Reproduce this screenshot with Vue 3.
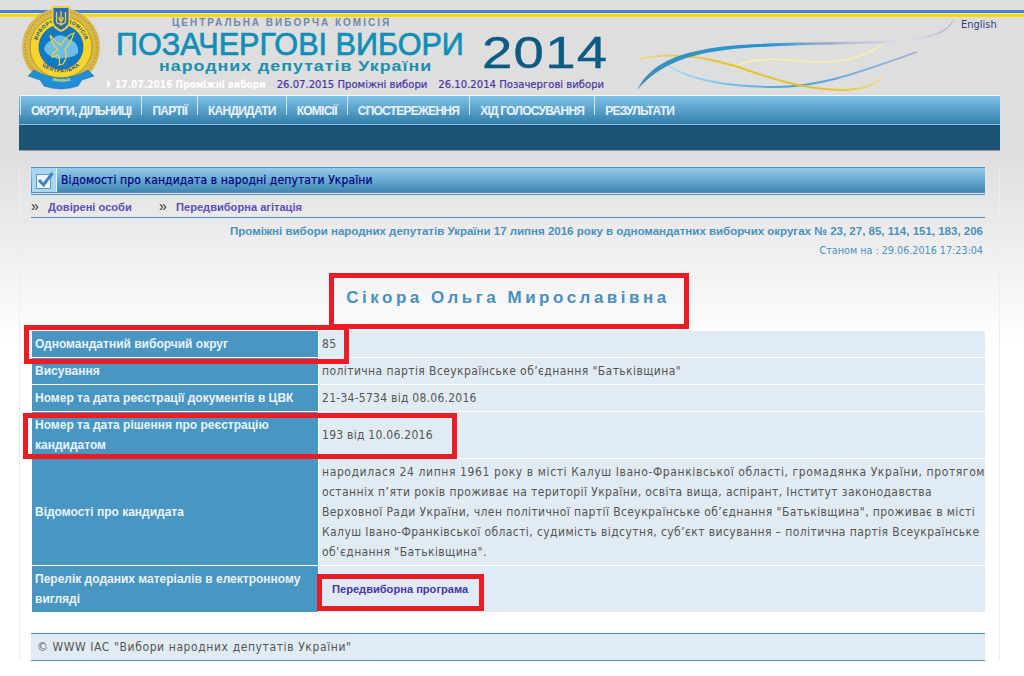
<script setup>
const navItems = ['ОКРУГИ, ДІЛЬНИЦІ', 'ПАРТІЇ', 'КАНДИДАТИ', 'КОМІСІЇ', 'СПОСТЕРЕЖЕННЯ', 'ХІД ГОЛОСУВАННЯ', 'РЕЗУЛЬТАТИ'];
const elections = [
  { text: '26.07.2015 Проміжні вибори' },
  { text: '26.10.2014 Позачергові вибори' }
];
const bio = [
  'народилася 24 липня 1961 року в місті Калуш Івано-Франківської області, громадянка України, протягом',
  'останніх п’яти років проживає на території України, освіта вища, аспірант, Інститут законодавства',
  'Верховної Ради України, член політичної партії Всеукраїнське об’єднання "Батьківщина", проживає в місті',
  'Калуш Івано-Франківської області, судимість відсутня, суб’єкт висування – політична партія Всеукраїнське',
  'об’єднання "Батьківщина".'
];
</script>

<template>
  <div class="page">
    <div class="stripe"></div>

    <header class="head">
      <!-- декоративні лінії -->
      <svg class="swoosh" width="1024" height="95" viewBox="0 0 1024 95">
        <defs>
          <linearGradient id="gBlue" x1="637" y1="0" x2="954" y2="0" gradientUnits="userSpaceOnUse">
            <stop offset="0" stop-color="#3f8fb5" />
            <stop offset="0.4" stop-color="#1f96d6" />
            <stop offset="0.62" stop-color="#a9b0ca" />
            <stop offset="0.85" stop-color="#e2e4ea" />
            <stop offset="1" stop-color="#a9aecb" />
          </linearGradient>
          <linearGradient id="gSky" x1="669" y1="0" x2="917" y2="0" gradientUnits="userSpaceOnUse">
            <stop offset="0" stop-color="#a8dcf5" />
            <stop offset="0.5" stop-color="#3ea6dc" />
            <stop offset="1" stop-color="#b0b4d4" />
          </linearGradient>
          <linearGradient id="gGold" x1="640" y1="0" x2="882" y2="0" gradientUnits="userSpaceOnUse">
            <stop offset="0" stop-color="#e8d890" />
            <stop offset="0.3" stop-color="#e6c227" />
            <stop offset="0.8" stop-color="#e6c433" />
            <stop offset="1" stop-color="#eedc98" />
          </linearGradient>
        </defs>
        <path d="M732 68C745 60 765 58 790 60C820 63 850 66 882 45" fill="none" stroke="#f7eeb0" stroke-width="1.6" />
        <path d="M669 66C690 80 730 87 775 87C825 87 870 68 917 52" fill="none" stroke="url(#gSky)" stroke-width="2" />
        <path d="M640 59C665 53 695 54 735 66C770 78 800 89 840 90C860 90 875 85 882 77" fill="none" stroke="url(#gGold)" stroke-width="2" />
        <path d="M637 90C650 65 675 50 740 45C800 41 860 43 900 40C930 37 948 32 954 18C951 33 930 39 900 42C860 45 800 44 745 48C690 52 660 64 637 90Z" fill="url(#gBlue)" />
      </svg>

      <svg class="logo" width="82" height="84" viewBox="0 0 82 84">
        <defs>
          <path id="ringTop" d="M16.5 50A24.5 24.5 0 1 1 61.5 50" />
          <path id="ringBottom" d="M12 48A29 29 0 0 0 66 48" />
          <path id="ribbonText" d="M25 73Q39 79 53 73" />
        </defs>
        <circle cx="39" cy="41" r="39" fill="#d9b84a" />
        <circle cx="39" cy="41" r="36" fill="none" stroke="#c39f2f" stroke-width="2" stroke-dasharray="1.5 2" />
        <circle cx="39" cy="41" r="31" fill="#f4d52e" stroke="#a88a25" stroke-width="0.8" />
        <circle cx="39" cy="41" r="22" fill="#1079c4" stroke="#2b5f8f" stroke-width="0.8" />
        <path d="M22 43C24 35 30 35 33 31C38 27 44 31 48 34C54 35 57 41 56 47C50 53 42 51 36 53C30 51 24 49 22 43Z" fill="#6fbdeb" />
        <path d="M28 29C32 35 36 37 39 39C42 33 46 29 52 27C50 33 47 39 43 43C45 48 44 54 41 58L37 59C38 54 38 51 36 49L30 51L31 47L36 44C32 40 29 35 28 29Z" fill="none" stroke="#f4d52e" stroke-width="1.2" />
        <text class="logo__ring" font-size="5.2" letter-spacing="0.5"><textPath href="#ringTop" startOffset="50%" text-anchor="middle">ВИБОРЧА &#160; &#160; КОМІСІЯ</textPath></text>
        <text class="logo__ring" font-size="5.2" letter-spacing="0.5"><textPath href="#ringBottom" startOffset="50%" text-anchor="middle">ЦЕНТРАЛЬНА</textPath></text>
        <path d="M12 64Q26 72 39 72Q52 72 66 64L72 70L60 74L56 80Q39 86 22 80L18 74L6 70Z" fill="#1f8fd8" stroke="#0d6cae" stroke-width="0.5" />
        <text class="logo__ribbon" font-size="4.4"><textPath href="#ribbonText" startOffset="50%" text-anchor="middle">УКРАЇНА</textPath></text>
        <path d="M30 0H48V16Q48 22 39 26Q30 22 30 16Z" fill="#f3cf2c" />
        <path d="M31.5 2H46.5V15.5Q46.5 20 39 24Q31.5 20 31.5 15.5Z" fill="#2b6cb8" />
        <path d="M39 5V20M34.5 6V15C34.5 18 37 18 39 18C41 18 43.5 18 43.5 15V6M37 11C37 14 38 15 39 15C40 15 41 14 41 11" fill="none" stroke="#f3cf2c" stroke-width="1.3" />
      </svg>

      <a class="lang">English</a>

      <div class="brand">
        <div class="brand__org">ЦЕНТРАЛЬНА ВИБОРЧА КОМІСІЯ</div>
        <div class="brand__row">
          <div>
            <div class="brand__title">ПОЗАЧЕРГОВІ ВИБОРИ</div>
            <div class="brand__sub">народних депутатів України</div>
          </div>
          <div class="brand__year">2014</div>
        </div>
        <div class="dates">
          <span class="dates__active"><i class="dates__arrow"></i>17.07.2016 Проміжні вибори</span>
          <a v-for="item in elections" :key="item.text" class="dates__link">{{ item.text }}</a>
        </div>
      </div>
    </header>

    <nav class="nav">
      <ul class="nav__list">
        <li v-for="item in navItems" :key="item" class="nav__item">{{ item }}</li>
      </ul>
      <div class="nav__sub"></div>
    </nav>

    <main class="panel">
      <div class="title-bar">
        <span class="title-bar__icon">
          <svg width="19" height="19" viewBox="0 0 19 19">
            <rect x="1.5" y="3.5" width="14" height="14" fill="#eef6fc" stroke="#5a9ac8" />
            <path d="M4 9L8.5 14L17.5 2" fill="none" stroke="#3f86bd" stroke-width="3" />
          </svg>
        </span>
        <h1 class="title-bar__text">Відомості про кандидата в народні депутати України</h1>
      </div>

      <div class="links">
        <span class="links__item"><b>»</b><a>Довірені особи</a></span>
        <span class="links__item"><b>»</b><a>Передвиборна агітація</a></span>
      </div>

      <div class="election">Проміжні вибори народних депутатів України 17 липня 2016 року в одномандатних виборчих округах № 23, 27, 85, 114, 151, 183, 206</div>
      <div class="stamp">Станом на : 29.06.2016 17:23:04</div>

      <h2 class="person">Сікора Ольга Мирославівна</h2>

      <table class="info">
        <tbody>
          <tr>
            <th>Одномандатний виборчий округ</th>
            <td>85</td>
          </tr>
          <tr>
            <th>Висування</th>
            <td>політична партія Всеукраїнське об’єднання "Батьківщина"</td>
          </tr>
          <tr>
            <th>Номер та дата реєстрації документів в ЦВК</th>
            <td class="info__num">21-34-5734 від 08.06.2016</td>
          </tr>
          <tr>
            <th>Номер та дата рішення про реєстрацію кандидатом</th>
            <td class="info__num">193 від 10.06.2016</td>
          </tr>
          <tr>
            <th>Відомості про кандидата</th>
            <td>
              <div v-for="line in bio" :key="line" class="info__line">{{ line }}</div>
            </td>
          </tr>
          <tr>
            <th>Перелік доданих матеріалів в електронному вигляді</th>
            <td><a class="info__doc">Передвиборна програма</a></td>
          </tr>
        </tbody>
      </table>

      <footer class="foot">© WWW IAC "Вибори народних депутатів України"</footer>
    </main>

    <!-- червоні рамки поверх сторінки -->
    <div class="mark mark--name"></div>
    <div class="mark mark--district"></div>
    <div class="mark mark--decision"></div>
    <div class="mark mark--doc"></div>
  </div>
</template>

<style>
body {
  background: #fff;
}
</style>

<style scoped>
.page {
  position: relative;
  height: 676px;
  overflow: hidden;
  font-family: "DejaVu Sans Condensed", "DejaVu Sans", sans-serif;
  font-stretch: condensed;
  background: linear-gradient(#dedede 0, #dedede 150px, #ffffff 345px);
}

.stripe {
  height: 3px;
  margin-top: 10px;
  position: absolute;
  top: 0;
  left: 0;
  right: 0;
  background: #4a80c8;
  box-shadow: 0 1px 0 #e8e4c0, 0 3px 0 #fcd900, 0 4px 0 #fcd900;
}

.head {
  position: relative;
  height: 95px;
  box-sizing: border-box;
  padding: 17px 0 0 114px;
}

.swoosh {
  position: absolute;
  left: 0;
  top: 0;
}

.logo {
  position: absolute;
  left: 22px;
  top: 6px;
}

.logo__ring {
  font-family: "Liberation Sans", sans-serif;
  font-weight: 700;
  fill: #1c4f86;
}

.logo__ribbon {
  font-family: "Liberation Sans", sans-serif;
  font-weight: 700;
  fill: #f4e36a;
}

.lang {
  position: absolute;
  top: 18px;
  left: 961px;
  font-size: 11px;
  line-height: 13px;
  color: #2f3f7d;
}

.brand {
  position: relative;
}

.brand__org {
  margin-left: 58px;
  font-family: "Liberation Sans", sans-serif;
  font-size: 10px;
  font-weight: 700;
  line-height: 12px;
  letter-spacing: 2px;
  color: #7088a8;
}

.brand__row {
  display: flex;
}

.brand__title {
  margin-left: 2px;
  font-family: "Liberation Sans", sans-serif;
  font-size: 30.6px;
  line-height: 30px;
  font-weight: 400;
  -webkit-text-stroke: 0.7px #0f8fb8;
  color: #0f8fb8;
  white-space: nowrap;
}

.brand__sub {
  margin: 0 0 0 45px;
  font-family: "Liberation Sans", sans-serif;
  font-size: 14px;
  line-height: 15px;
  font-weight: 700;
  letter-spacing: 0.8px;
  color: #1890ae;
  white-space: nowrap;
  transform: scaleX(1.27);
  transform-origin: left center;
}

.brand__year {
  margin: 3px 0 0 18px;
  font-family: "Liberation Sans", sans-serif;
  font-size: 44px;
  line-height: 42px;
  letter-spacing: 1px;
  color: #0d5a82;
  -webkit-text-stroke: 0.4px #0d5a82;
  transform: scaleX(1.24);
  transform-origin: left center;
}

.dates {
  display: flex;
  align-items: center;
  margin-top: 4px;
  font-size: 11.2px;
  line-height: 14px;
  white-space: nowrap;
}

.dates__arrow {
  display: inline-block;
  margin: 0 4px 0 -8px;
  border-left: 4px solid #fff;
  border-top: 4px solid transparent;
  border-bottom: 4px solid transparent;
}

.dates__active {
  margin-left: 1px;
  font-size: 10.1px;
  font-weight: 700;
  color: #fff;
}

.dates__link {
  margin-left: 11px;
  color: #4a35a8;
  -webkit-text-stroke: 0.2px #4a35a8;
}

.nav {
  margin: 0 24px 0 19px;
  border-bottom: 1px solid #999;
}

.nav__list {
  display: flex;
  height: 28px;
  margin: 0;
  padding: 0 0 0 1px;
  list-style: none;
  border-top: 1px solid #f0f8fc;
  border-bottom: 1px solid #8fc0dc;
  background: linear-gradient(#80c2e8, #3280ac);
}

.nav__item {
  padding: 0 10px;
  border-left: 1px solid #cfe6f2;
  height: 19px;
  font-family: "Liberation Sans", sans-serif;
  font-size: 12px;
  font-weight: 700;
  line-height: 30px;
  letter-spacing: -0.75px;
  color: #e9f3f9;
}

.nav__sub {
  height: 25px;
  background: #1c5276;
}

.panel {
  margin: 16px 24px 0 19px;
  padding: 0 14px 0 11px;
  height: 494px;
  border-left: 1px solid #eeeeee;
  border-right: 1px solid #eeeeee;
}

.title-bar {
  display: flex;
  align-items: stretch;
  height: 24px;
  border-top: 1px solid #4a90c0;
  border-bottom: 1px solid #4a90c0;
  box-shadow: 0 1px 0 #dde, 0 2px 0 #4a90c0;
  background: linear-gradient(#94cbeb, #4187b5);
}

.title-bar__icon {
  display: flex;
  align-items: center;
  justify-content: center;
  width: 24px;
  margin-left: 1px;
  background: #a9d7f2;
  border-right: 1px solid #e8f3fa;
}

.title-bar__text {
  margin: 0 0 0 4px;
  font-size: 12px;
  font-weight: 400;
  line-height: 24px;
  letter-spacing: 0.12px;
  color: #000080;
  -webkit-text-stroke: 0.2px #000080;
}

.links {
  display: flex;
  height: 22px;
  margin-top: 2px;
  border-bottom: 1px solid #4a90c0;
  font-family: "Liberation Sans", sans-serif;
  font-size: 11.1px;
  line-height: 22px;
}

.links__item {
  width: 128px;
  white-space: nowrap;
}

.links__item b {
  display: inline-block;
  width: 17px;
  font-size: 14px;
  font-weight: 400;
  color: #333;
}

.links__item a {
  font-weight: 700;
  color: #5a4fb8;
}

.election {
  margin: 6px 2px 0 0;
  font-family: "Liberation Sans", sans-serif;
  font-size: 11.5px;
  font-weight: 700;
  line-height: 14px;
  text-align: right;
  color: #4a90c0;
  white-space: nowrap;
}

.stamp {
  margin: 6px 2px 0 0;
  font-size: 10.7px;
  line-height: 14px;
  text-align: right;
  color: #4a90c0;
}

.person {
  margin: 28px 0 0;
  height: 44px;
  font-family: "Liberation Sans", sans-serif;
  font-size: 17px;
  font-weight: 700;
  line-height: 24px;
  letter-spacing: 3.5px;
  text-align: center;
  color: #4a90c0;
}

.info {
  width: 953px;
  margin: 0 0 0 1px;
  border-collapse: separate;
  border-spacing: 0;
  table-layout: fixed;
  border-top: 1px solid #fff;
  font-size: 12px;
  letter-spacing: 0.41px;
}

.info th {
  width: 279px;
  padding: 3px 4px 3px 3px;
  border-bottom: 1px solid #fff;
  border-right: 1px solid #fff;
  font-family: "Liberation Sans", sans-serif;
  font-size: 12px;
  font-stretch: normal;
  font-weight: 700;
  line-height: 20px;
  letter-spacing: 0;
  text-align: left;
  color: #e9f3f9;
  background: #4a96c2;
}

.info td {
  padding: 3px 4px 3px 3px;
  border-bottom: 1px solid #fff;
  line-height: 20px;
  color: #555;
  background: #e1ebf4;
  white-space: nowrap;
}

.info td.info__num {
  letter-spacing: 0.26px;
}

.info__line:first-child {
  letter-spacing: 0.6px;
}

.info__doc {
  margin-left: 10px;
  font-family: "Liberation Sans", sans-serif;
  font-stretch: normal;
  font-weight: 700;
  font-size: 11.1px;
  letter-spacing: 0;
  color: #4a35a8;
}

.foot {
  margin-top: 20px;
  height: 26px;
  padding-left: 6px;
  border-top: 1px solid #4a90c0;
  border-bottom: 1px solid #4a90c0;
  font-size: 12px;
  letter-spacing: 0.6px;
  line-height: 27px;
  color: #555;
  background: #e1ebf4;
}

.mark {
  position: absolute;
  box-sizing: border-box;
  border: 5px solid #ed1c24;
}

.mark--name {
  left: 329px;
  top: 273px;
  width: 360px;
  height: 56px;
}

.mark--district {
  left: 24px;
  top: 325px;
  width: 325px;
  height: 39px;
}

.mark--decision {
  left: 23px;
  top: 413px;
  width: 434px;
  height: 46px;
}

.mark--doc {
  left: 317px;
  top: 574px;
  width: 167px;
  height: 37px;
}
</style>
